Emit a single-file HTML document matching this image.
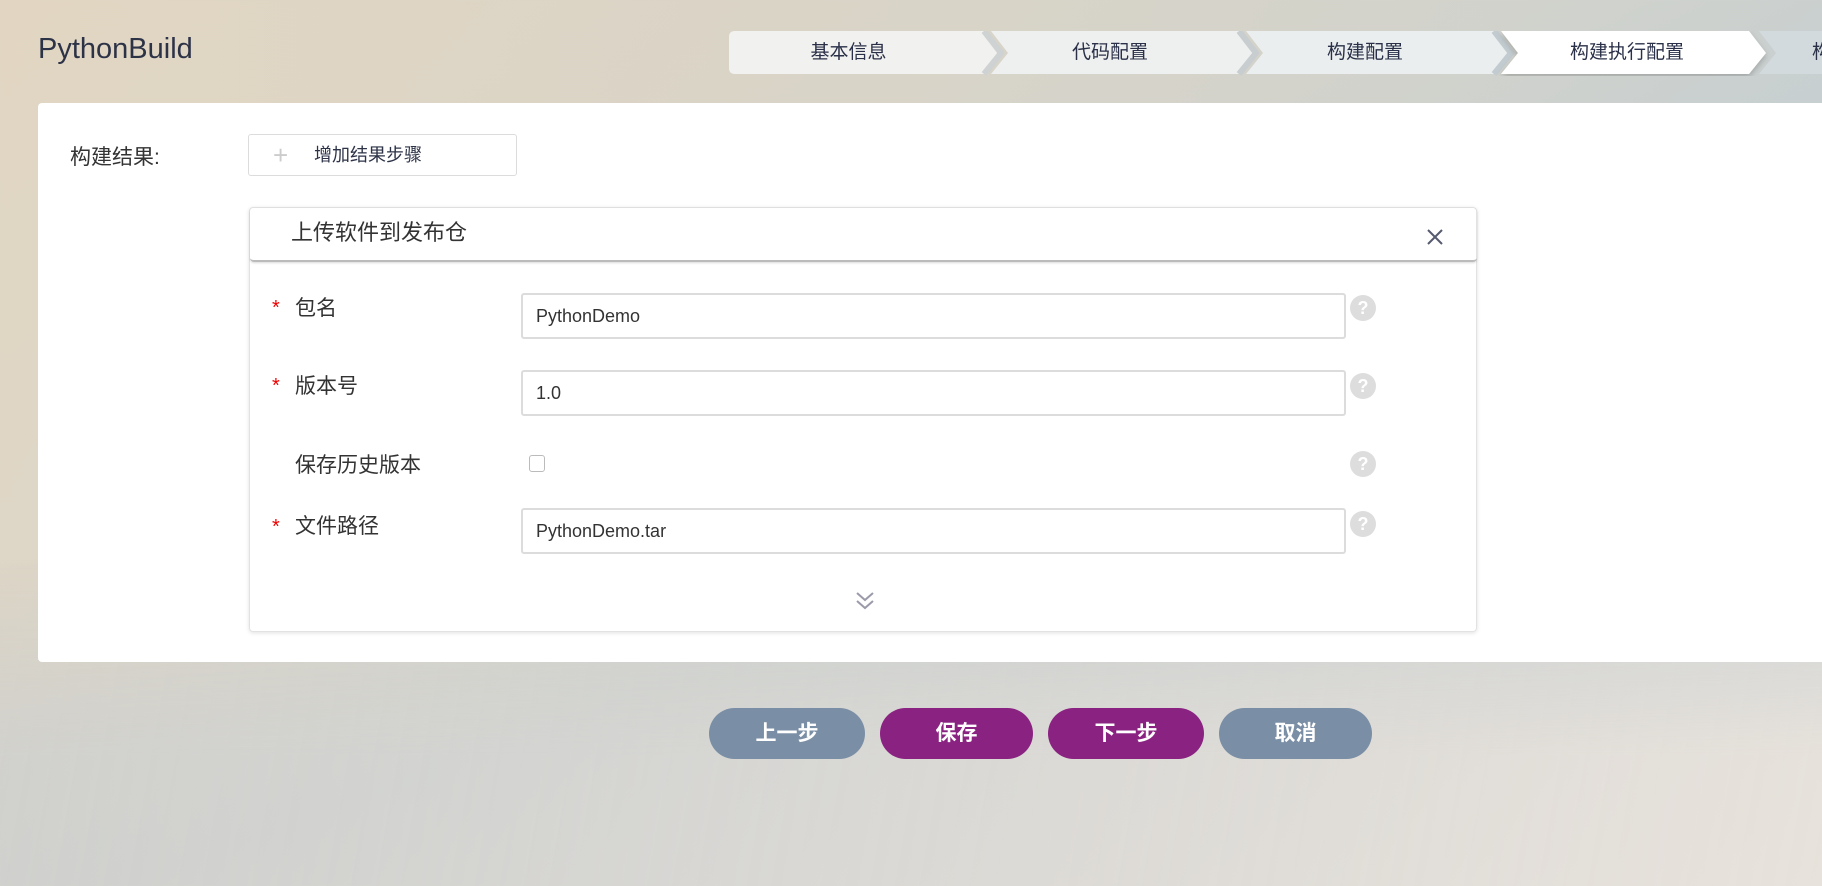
<!DOCTYPE html>
<html><head><meta charset="utf-8"><style>
*{box-sizing:border-box;margin:0;padding:0}
body{width:1822px;height:886px;overflow:hidden;position:relative;font-family:"Liberation Sans","Noto Sans CJK SC",sans-serif;
background:linear-gradient(160deg,#e2d6c2 0%,#d9d6cc 35%,#c4cfd3 60%,#d6d7d6 80%,#e6e1db 100%);}
.bg2{position:absolute;left:0;top:0;width:1822px;height:886px;background:linear-gradient(90deg,rgba(226,214,194,.6),rgba(185,200,208,.3));}
.bg3{position:absolute;left:0;top:560px;width:1822px;height:326px;background:linear-gradient(100deg,rgba(200,205,210,.5),rgba(235,228,220,.8));-webkit-mask-image:linear-gradient(180deg,transparent,#000 60%);mask-image:linear-gradient(180deg,transparent,#000 60%);}
.title{position:absolute;left:38px;top:33px;font-size:29px;color:#2d3347}
.tab{position:absolute;top:31px;height:43px;line-height:43px;text-align:center;font-size:19px;color:#2a3048}
.panel{position:absolute;left:38px;top:103px;width:1784px;height:559px;background:#fff;border-radius:4px 0 0 4px}
.lbl{position:absolute;font-size:21px;color:#333}
.add{position:absolute;left:248px;top:134px;width:269px;height:42px;border:1px solid #dcdcdc;border-radius:3px;font-size:18px;color:#2d3347;line-height:40px;padding-left:65px}
.card{position:absolute;left:249px;top:207px;width:1228px;height:425px;border:1px solid #e2e2e2;border-radius:4px;box-shadow:0 1px 4px rgba(0,0,0,.12)}
.hdr{position:absolute;left:0;top:0;width:1227px;height:54px;border-bottom:2px solid #bbb;border-radius:4px;box-shadow:0 1px 2px rgba(0,0,0,.15);font-size:22px;color:#333;line-height:50px;padding-left:41px}
.inp{position:absolute;left:521px;width:825px;height:46px;border:2px solid #dcdcdc;border-radius:3px;font-size:18px;color:#333;line-height:42px;padding-left:13px}
.star{position:absolute;left:272px;color:#e00;font-size:20px}
.help{position:absolute;left:1350px;width:26px;height:26px;border-radius:50%;background:#ddd;color:#fff;font-size:18px;font-weight:bold;text-align:center;line-height:26px}
.btn{position:absolute;top:708px;height:51px;border-radius:26px;color:#fff;font-size:21px;font-weight:bold;text-align:center;line-height:51px}
</style></head><body>
<div class="bg2"></div>
<div class="bg3"></div>
<div class="title">PythonBuild</div>
<svg style="position:absolute;left:729px;top:31px" width="1093" height="45">
<defs><filter id="s" x="-10%" y="-20%" width="120%" height="160%"><feDropShadow dx="0" dy="3" stdDeviation="3" flood-opacity=".2"/></filter></defs>
<path d="M6 0H255L272 22L255 43H6Q0 43 0 37V6Q0 0 6 0Z" fill="#f1f1ef"/>
<path d="M255 0L272 22L255 43" stroke="#cfd2d2" stroke-width="6" fill="none"/>
<path d="M262 0H510L527 22L510 43H262L279 22Z" fill="#eef0f0"/>
<path d="M510 0L527 22L510 43" stroke="#c8cdcf" stroke-width="6" fill="none"/>
<path d="M517 0H765L782 22L765 43H517L534 22Z" fill="#eaeeef"/>
<path d="M765 0L782 22L765 43" stroke="#c2cbcf" stroke-width="6" fill="none"/>
<path d="M772 0H1020L1037 22L1020 43H772L789 22Z" fill="#fff" filter="url(#s)"/>
<path d="M1030 0H1093V43H1030L1047 22Z" fill="#d3dadd"/>
</svg>
<div class="tab" style="left:719px;width:259px">基本信息</div>
<div class="tab" style="left:985px;width:250px">代码配置</div>
<div class="tab" style="left:1240px;width:250px">构建配置</div>
<div class="tab" style="left:1502px;width:250px">构建执行配置</div>
<div class="tab" style="left:1812px;width:40px;text-align:left">构</div>
<div class="panel"></div>
<div class="lbl" style="left:70px;top:141px">构建结果:</div>
<div class="add"><span style="position:absolute;left:24px;top:0;color:#ccc;font-size:26px;font-weight:200">+</span>增加结果步骤</div>
<div class="card">
<div class="hdr">上传软件到发布仓
<svg style="position:absolute;left:1176px;top:20px" width="18" height="18"><path d="M2 2L16 16M16 2L2 16" stroke="#555a6e" stroke-width="2"/></svg></div>
<svg style="position:absolute;left:605px;top:382px" width="20" height="24"><path d="M2 3L10 10L18 3M2 11L10 18L18 11" stroke="#9a9aaa" stroke-width="2" fill="none"/></svg>
</div>
<div class="star" style="top:297px">*</div><div class="lbl" style="left:295px;top:292px">包名</div>
<div class="inp" style="top:293px">PythonDemo</div><div class="help" style="top:295px">?</div>
<div class="star" style="top:375px">*</div><div class="lbl" style="left:295px;top:370px">版本号</div>
<div class="inp" style="top:370px">1.0</div><div class="help" style="top:373px">?</div>
<div class="lbl" style="left:295px;top:449px">保存历史版本</div>
<div style="position:absolute;left:529px;top:455px;width:16px;height:17px;border:1px solid #bbb;border-radius:3px"></div>
<div class="help" style="top:451px">?</div>
<div class="star" style="top:516px">*</div><div class="lbl" style="left:295px;top:510px">文件路径</div>
<div class="inp" style="top:508px">PythonDemo.tar</div><div class="help" style="top:511px">?</div>
<div class="btn" style="left:709px;width:156px;background:#7a8ea5">上一步</div>
<div class="btn" style="left:880px;width:153px;background:#8a2281">保存</div>
<div class="btn" style="left:1048px;width:156px;background:#8a2281">下一步</div>
<div class="btn" style="left:1219px;width:153px;background:#7a8ea5">取消</div>
</body></html>
